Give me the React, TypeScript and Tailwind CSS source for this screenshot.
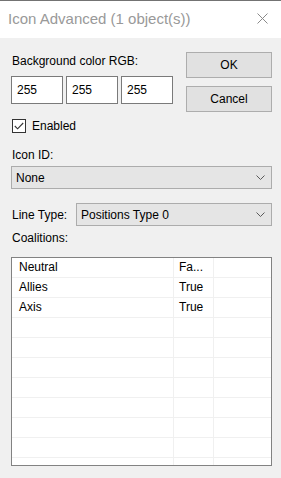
import React from "react";

const Chevron = () => (
  <svg width="9" height="6" viewBox="0 0 9 6" className="shrink-0">
    <path d="M0.5 0.5 L4.5 4.5 L8.5 0.5" fill="none" stroke="#5a5a5a" strokeWidth="1" />
  </svg>
);

const rows: [string, string][] = [
  ["Neutral", "Fa..."],
  ["Allies", "True"],
  ["Axis", "True"],
  ["", ""],
  ["", ""],
  ["", ""],
  ["", ""],
  ["", ""],
  ["", ""],
  ["", ""],
  ["", ""],
];

export default function App() {
  return (
    <div
      className="w-[281px] h-[478px] bg-[#f0f0f0] border-t border-[#737373] flex flex-col text-black text-[12px] overflow-hidden"
      style={{ fontFamily: '"Liberation Sans", Arial, sans-serif' }}
    >
      {/* Title bar */}
      <div className="h-[37px] bg-white flex items-center justify-between pl-[8px] pr-[13px] shrink-0">
        <span className="text-[15px] text-[#999999] leading-[20px] mt-[-2px]">Icon Advanced (1 object(s))</span>
        <svg width="11" height="11" viewBox="0 0 11 11" className="mt-[-2px]">
          <path d="M0.5 0.5 L10.5 10.5 M10.5 0.5 L0.5 10.5" stroke="#8a8a8a" strokeWidth="1" fill="none" />
        </svg>
      </div>

      {/* Body */}
      <div className="flex flex-col pl-[11px] pr-[9px] flex-1">
        <div className="flex justify-between">
          <div className="flex flex-col">
            <div className="mt-[15px] h-[16px] leading-[16px] pl-[1px]">Background color RGB:</div>
            <div className="flex gap-[3px] mt-[7px]">
              {["255", "255", "255"].map((v, i) => (
                <div
                  key={i}
                  className="w-[52px] h-[28px] bg-white border border-[#7a7a7a] flex items-center pl-[5px] leading-[16px]"
                >
                  {v}
                </div>
              ))}
            </div>
          </div>
          <div className="flex flex-col">
            <div className="mt-[14px] w-[86px] h-[26px] bg-[#e1e1e1] border border-[#adadad] flex items-center justify-center">
              OK
            </div>
            <div className="mt-[8px] w-[86px] h-[26px] bg-[#e1e1e1] border border-[#adadad] flex items-center justify-center">
              Cancel
            </div>
          </div>
        </div>

        {/* Checkbox */}
        <div className="flex items-center mt-[7px] ml-[1px] h-[14px]">
          <div className="w-[14px] h-[14px] bg-white border border-[#333333] flex items-center justify-center">
            <svg width="10" height="8" viewBox="0 0 10 8">
              <path d="M0.8 4 L3.6 6.8 L9.2 1" fill="none" stroke="#333333" strokeWidth="1.1" />
            </svg>
          </div>
          <span className="ml-[6px] leading-[16px]">Enabled</span>
        </div>

        {/* Icon ID */}
        <div className="mt-[14px] h-[16px] leading-[16px] pl-[1px]">Icon ID:</div>
        <div className="mt-[3px] h-[23px] bg-[#e5e5e5] border border-[#acacac] flex items-center justify-between pl-[4px] pr-[6px]">
          <span className="leading-[16px]">None</span>
          <Chevron />
        </div>

        {/* Line Type */}
        <div className="mt-[14px] flex items-center h-[23px]">
          <span className="w-[65px] pl-[1px] leading-[16px]">Line Type:</span>
          <div className="flex-1 h-[23px] bg-[#e5e5e5] border border-[#acacac] flex items-center justify-between pl-[4px] pr-[6px]">
            <span className="leading-[16px]">Positions Type 0</span>
            <Chevron />
          </div>
        </div>

        {/* Coalitions */}
        <div className="mt-[4px] h-[16px] leading-[16px] pl-[1px]">Coalitions:</div>
        <div className="mt-[11px] h-[209px] bg-white border border-[#828282] overflow-hidden flex flex-col">
          {rows.map(([a, b], i) => (
            <div key={i} className="flex h-[20px] shrink-0 border-b border-[#f0f0f0]">
              <div className="w-[162px] border-r border-[#f0f0f0] pl-[7px] leading-[19px]">{a}</div>
              <div className="w-[40px] border-r border-[#f0f0f0] pl-[5px] leading-[19px]">{b}</div>
              <div className="flex-1" />
            </div>
          ))}
        </div>
      </div>
    </div>
  );
}
